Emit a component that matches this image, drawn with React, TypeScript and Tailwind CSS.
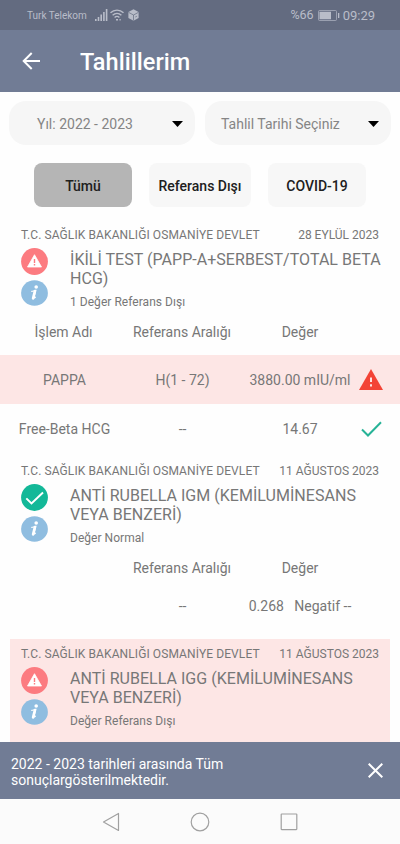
import { clsx } from "clsx";

type Status = "alert" | "normal";

interface ResultRow {
  name: string;
  range: string;
  value: string;
  status?: Status;
}

interface LabTest {
  date: string;
  title: string[];
  note: string;
  status: Status;
  nameHeading?: string;
  rows: ResultRow[];
  highlighted?: boolean;
}

const HOSPITAL = "T.C. SAĞLIK BAKANLIĞI OSMANİYE DEVLET";

const TESTS: LabTest[] = [
  {
    date: "28 EYLÜL 2023",
    title: ["İKİLİ TEST (PAPP-A+SERBEST/TOTAL BETA", "HCG)"],
    note: "1 Değer Referans Dışı",
    status: "alert",
    nameHeading: "İşlem Adı",
    rows: [
      { name: "PAPPA", range: "H(1 - 72)", value: "3880.00 mIU/ml", status: "alert" },
      { name: "Free-Beta HCG", range: "--", value: "14.67", status: "normal" },
    ],
  },
  {
    date: "11 AĞUSTOS 2023",
    title: ["ANTİ RUBELLA IGM (KEMİLUMİNESANS", "VEYA BENZERİ)"],
    note: "Değer Normal",
    status: "normal",
    rows: [{ name: "", range: "--", value: "0.268   Negatif --" }],
  },
  {
    date: "11 AĞUSTOS 2023",
    title: ["ANTİ RUBELLA IGG (KEMİLUMİNESANS", "VEYA BENZERİ)"],
    note: "Değer Referans Dışı",
    status: "alert",
    rows: [],
    highlighted: true,
  },
];

const FILTERS = ["Tümü", "Referans Dışı", "COVID-19"];

function StatusBar() {
  return (
    <div className="flex h-[30px] shrink-0 items-center bg-[#636b80] pl-[27px] pr-[25px] text-[#b9bdc9]">
      <span className="text-[10px]">Turk Telekom</span>
      <svg className="ml-[8px] h-3 w-[13px]" viewBox="0 0 13 12" fill="currentColor">
        <path d="M0 10h1.6v2H0zM2.7 8h1.6v4H2.7zM5.4 5.5H7V12H5.4zM8.1 3h1.6v9H8.1zM10.8 0h1.6v12h-1.6z" />
      </svg>
      <svg className="ml-[2px] h-3 w-[14px]" viewBox="0 0 14 12" fill="none" stroke="currentColor" strokeWidth="1.4">
        <path d="M.5 3.8C4.2.2 9.8.2 13.5 3.8M2.6 6.3c2.6-2.4 6.2-2.4 8.8 0M4.6 8.5c1.4-1.3 3.4-1.3 4.8 0" />
        <path d="M6 10.8h2M9.5 10.8h1.2" />
      </svg>
      <svg className="ml-[4px] h-3 w-[11px]" viewBox="0 0 11 12">
        <path d="M5.5.3 10.6 3v6L5.5 11.8.4 9V3z" fill="currentColor" />
        <path d="M.6 3.4 5.5 6l4.9-2.6M5.5 6v5.5M7.3 8l1.6-.8" fill="none" stroke="#636b80" strokeWidth=".7" />
      </svg>
      <span className="ml-auto pt-px text-[12.5px]">%66</span>
      <svg className="ml-[4px] mt-px h-[11px] w-[22px]" viewBox="0 0 22 11">
        <rect x=".5" y=".5" width="18" height="10" rx="1" fill="none" stroke="currentColor" strokeOpacity=".65" />
        <path d="M1.5 1.8H13v7.4H1.5zM20 3h1.3v5H20z" fill="currentColor" />
      </svg>
      <span className="ml-[3px] pt-px text-[13px]">09:29</span>
    </div>
  );
}

function Header() {
  return (
    <header className="flex h-[62px] shrink-0 items-center bg-[#717c95] pl-[22px] text-white">
      <svg className="h-[18px] w-[18px]" viewBox="0 0 18 18" fill="none" stroke="currentColor" strokeWidth="2">
        <path d="M18 9H2M9.7 1 1.7 9l8 8" />
      </svg>
      <h1 className="ml-[40px] pt-[3px] text-[23.5px] font-medium tracking-[0.05px]">Tahlillerim</h1>
    </header>
  );
}

function Dropdown({ label, className }: { label: string; className: string }) {
  return (
    <button
      className={clsx(
        "flex h-[44px] w-[186px] items-center justify-between rounded-[17px] bg-[#f6f6f6] text-[14px] text-[#858585]",
        className
      )}
    >
      <span className="pt-[2px]">{label}</span>
      <svg className="mt-[2px] h-[6px] w-[11px]" viewBox="0 0 11 6">
        <path d="M0 0h11L5.5 6z" fill="#000" />
      </svg>
    </button>
  );
}

function StatusBadge({ status }: { status: Status }) {
  return (
    <svg className="h-[27px] w-[27px]" viewBox="0 0 27 27">
      <circle cx="13.5" cy="13.5" r="13.4" fill={status === "alert" ? "#fc7b80" : "#13b898"} />
      {status === "alert" ? (
        <>
          <path d="M13.5 6.7 20.5 19H6.5z" fill="#fff" stroke="#fff" strokeWidth=".8" strokeLinejoin="round" />
          <path d="M13.5 11v4M13.5 16v1.6" stroke="#fc7b80" strokeWidth="1.4" />
        </>
      ) : (
        <path d="m5.3 14.4 5.2 5L22 8.6" fill="none" stroke="#fff" strokeWidth="2" />
      )}
    </svg>
  );
}

function InfoBadge() {
  return (
    <svg className="mt-[5px] h-[26px] w-[27px]" viewBox="0 0 27 26">
      <ellipse cx="13.5" cy="13" rx="13.4" ry="12.8" fill="#8fbde0" />
      <circle cx="15.2" cy="7" r="1.8" fill="#fff" />
      <path
        d="M10.7 11.4c1.6-.2 2.4-.8 4.2-1l-1.9 7.2c-.2.8.5.5 1.5-.5"
        fill="none"
        stroke="#fff"
        strokeWidth="1.1"
        strokeLinecap="round"
      />
      <path d="m13.9 11-1.8 7.4" stroke="#fff" strokeWidth="2.6" strokeLinecap="round" />
    </svg>
  );
}

function RowIcon({ status }: { status: Status }) {
  if (status === "alert") {
    return (
      <svg className="h-[21px] w-6" viewBox="0 0 24 21">
        <path d="M12 0 24 21H0z" fill="#f34336" />
        <path d="M12 8.5v4.6M12 15.2v2.3" stroke="#fde5e4" strokeWidth="2" />
      </svg>
    );
  }
  return (
    <svg className="h-[16px] w-[21px]" viewBox="0 0 21 16" fill="none" stroke="#27b397" strokeWidth="2">
      <path d="m1 8.5 6 6L20 1.3" />
    </svg>
  );
}

function Row({ row }: { row: ResultRow }) {
  return (
    <div
      className={clsx(
        "flex items-center whitespace-pre pl-[5px] text-center text-[14px]",
        row.status ? "h-[49px]" : "h-[48px] pb-[19px]",
        row.status === "alert" && "bg-[#fde6e5]"
      )}
    >
      <span className="w-[119px] pt-px">{row.name}</span>
      <span className="w-[117px] pt-px">{row.range}</span>
      <span className="w-[118px] pt-px">{row.value}</span>
      <span className="flex w-[24px] justify-center">{row.status && <RowIcon status={row.status} />}</span>
    </div>
  );
}

function TestCard({ test }: { test: LabTest }) {
  return (
    <article className={clsx("text-[#777]", test.highlighted && "h-[103px]")}>
      <div className={clsx("mx-[10px]", test.highlighted && "h-full bg-[#fde6e5]")}>
        <div className="flex h-[28px] items-center justify-between pl-[11px] pr-[11px] pt-px text-[12px]">
          <span className="tracking-[0.1px]">{HOSPITAL}</span>
          <span>{test.date}</span>
        </div>
        <div className="flex pl-[11px]">
          <div className="flex flex-col">
            <StatusBadge status={test.status} />
            <InfoBadge />
          </div>
          <div className="ml-[22px] whitespace-nowrap pt-[2px]">
            <h2 className="text-[16px] leading-[19px] tracking-[0.03px]">
              {test.title.map((line) => (
                <span key={line} className="block">
                  {line}
                </span>
              ))}
            </h2>
            <p className="mt-[6px] text-[12px] leading-[16px] tracking-[0.04px]">{test.note}</p>
          </div>
        </div>
      </div>
      {test.rows.length > 0 && (
        <div className={clsx(test.rows.length > 1 && "mb-[3px]")}>
          <div className="mt-[9px] flex h-[36px] items-start pl-[4px] pt-[4px] text-center text-[14px] leading-[18px]">
            <span className="w-[119px]">{test.nameHeading}</span>
            <span className="w-[118px]">Referans Aralığı</span>
            <span className="w-[118px]">Değer</span>
          </div>
          {test.rows.map((row) => (
            <Row key={row.value} row={row} />
          ))}
        </div>
      )}
    </article>
  );
}

function NavBar() {
  return (
    <nav className="flex h-[45px] shrink-0 items-center justify-center gap-[69px] bg-[#fbfbfb]">
      <svg className="h-5 w-5" viewBox="0 0 20 20" fill="none" stroke="#a0a0a0" strokeWidth="1.2">
        <path d="M17.5 1.5v17L2.5 10z" strokeLinejoin="round" />
      </svg>
      <svg className="h-5 w-5" viewBox="0 0 20 20" fill="none" stroke="#a0a0a0" strokeWidth="1.2">
        <circle cx="10" cy="10" r="8.8" />
      </svg>
      <svg className="h-5 w-5" viewBox="0 0 20 20" fill="none" stroke="#a0a0a0" strokeWidth="1.2">
        <rect x="2.2" y="2" width="15.6" height="15.6" rx=".5" />
      </svg>
    </nav>
  );
}

export default function App() {
  return (
    <div className="flex h-[844px] w-[400px] flex-col overflow-hidden bg-[#fefefe] font-[Roboto,sans-serif]">
      <StatusBar />
      <Header />

      {/* Filters */}
      <div className="flex gap-[10px] px-[9px] pt-[9px]">
        <Dropdown label="Yıl: 2022 - 2023" className="pl-[28px] pr-[12px]" />
        <Dropdown label="Tahlil Tarihi Seçiniz" className="pl-[16px] pr-[12px]" />
      </div>
      <div className="mt-[18px] flex justify-between pl-[34px] pr-[34px]">
        {FILTERS.map((filter, i) => (
          <button
            key={filter}
            className={clsx(
              "h-[44px] rounded-[8px] pt-[2px] text-[14px] font-medium text-[#202020]",
              i === 0 ? "bg-[#b5b5b5]" : "bg-[#f7f7f7]",
              i === 1 ? "w-[102px]" : "w-[98px]"
            )}
          >
            {filter}
          </button>
        ))}
      </div>

      <main className="mt-[13px] min-h-0 flex-1 overflow-hidden">
        {TESTS.map((test) => (
          <TestCard key={test.title[0]} test={test} />
        ))}
      </main>

      {/* Active filter notice */}
      <div className="flex h-[57px] shrink-0 items-center justify-between bg-[#717c95] pl-[11px] pr-[17px] text-white">
        <p className="pt-[2px] text-[14px] leading-[16px]">
          2022 - 2023 tarihleri arasında Tüm
          <br />
          sonuçlargösterilmektedir.
        </p>
        <svg className="h-[15px] w-[15px]" viewBox="0 0 15 15" stroke="currentColor" strokeWidth="2">
          <path d="m.7.7 13.6 13.6M14.3.7.7 14.3" />
        </svg>
      </div>
      <NavBar />
    </div>
  );
}
